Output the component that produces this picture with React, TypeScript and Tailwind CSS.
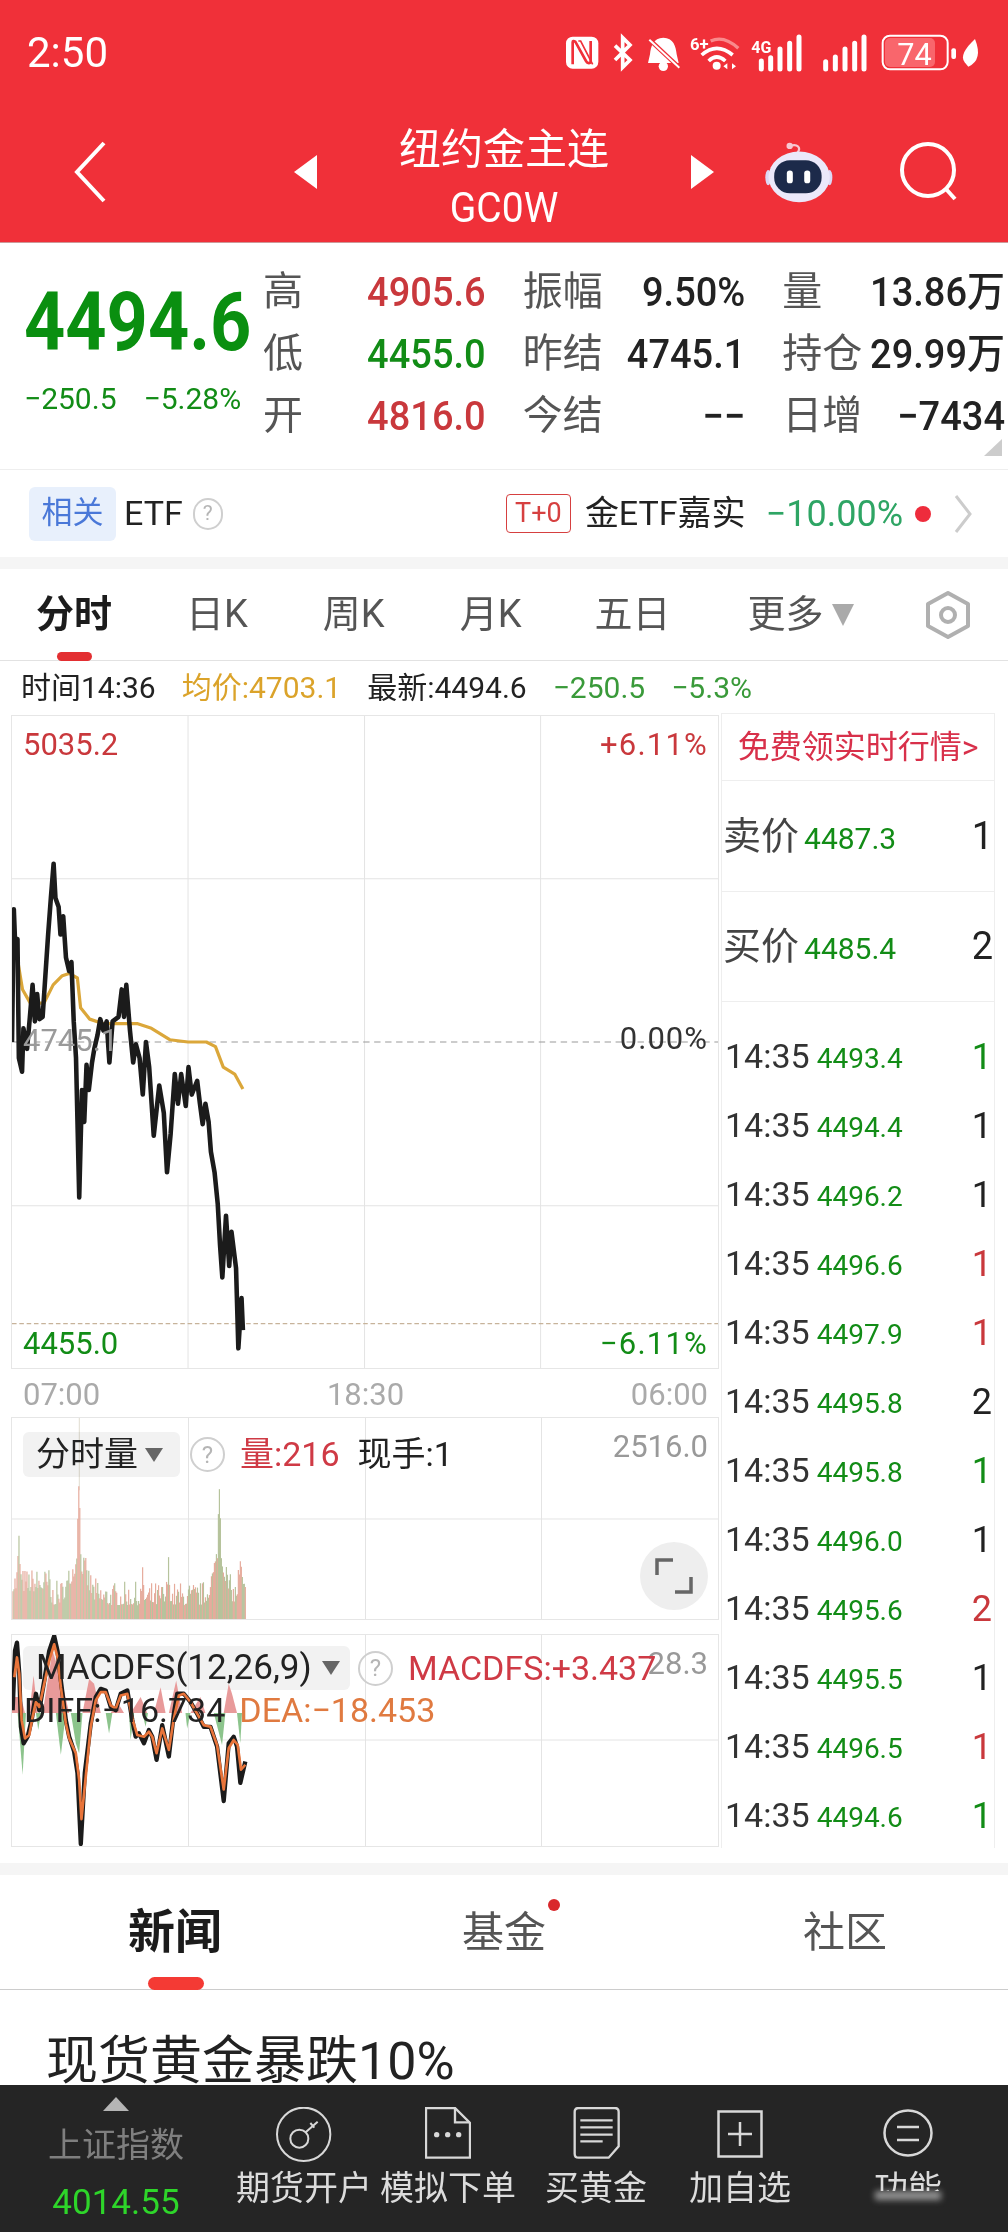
const tradeRows = [
  { price: '4493.4', qty: '1', color: 'text-[#128c16]' },
  { price: '4494.4', qty: '1', color: 'text-[#222]' },
  { price: '4496.2', qty: '1', color: 'text-[#222]' },
  { price: '4496.6', qty: '1', color: 'text-[#c9383c]' },
  { price: '4497.9', qty: '1', color: 'text-[#c9383c]' },
  { price: '4495.8', qty: '2', color: 'text-[#222]' },
  { price: '4495.8', qty: '1', color: 'text-[#128c16]' },
  { price: '4496.0', qty: '1', color: 'text-[#222]' },
  { price: '4495.6', qty: '2', color: 'text-[#c9383c]' },
  { price: '4495.5', qty: '1', color: 'text-[#222]' },
  { price: '4496.5', qty: '1', color: 'text-[#c9383c]' },
  { price: '4494.6', qty: '1', color: 'text-[#128c16]' },
];

const pricePts =
  '25,745 29,455 33,560 37,520 40,780 47,810 50,715 58,760 65,680 70,620 75,700 80,640 85,695 92,690 98,600 104,510 110,430 116,355 120,430 127,450 131,510 137,470 143,560 150,590 155,570 160,700 165,780 172,1085 178,850 183,920 188,795 193,850 200,790 205,760 212,730 218,695 225,720 232,700 238,790 245,700 258,690 265,630 270,690 275,620 283,720 290,790 296,750 304,780 311,860 318,745 325,800 335,950 347,840 357,900 364,1030 372,945 381,815 388,880 395,815 405,885 411,800 418,860 430,830 436,880 442,925 448,880 455,920 460,985 468,1030 475,1100 480,1190 485,1260 493,1125 500,1235 505,1160 515,1240 520,1415 527,1305 530,1375';
const avgPts =
  '38,570 48,630 65,660 95,660 115,620 135,600 150,595 168,605 175,670 195,695 225,705 260,705 300,705 330,715 370,740 410,745 450,745 470,755 487,800 512,815 530,848';
const diffPts =
  '5,240 12,60 18,35 25,130 30,290 38,340 50,320 62,270 75,190 85,240 100,150 115,60 130,15 140,60 150,150 165,270 175,320 190,365 200,430 210,645 222,430 240,280 255,200 270,175 285,180 300,230 315,240 330,190 350,180 365,270 375,320 385,310 400,340 415,300 425,320 438,390 455,285 475,380 490,250 500,190 520,190 540,215 560,250 580,290 600,290 620,350 640,515 655,340 670,320 680,350 690,460 705,395';
const deaPts =
  '10,140 18,80 25,130 32,270 42,325 55,315 65,260 75,215 85,230 100,160 115,90 130,40 140,80 150,170 165,280 175,325 195,370 205,450 212,570 225,440 240,290 255,210 270,185 285,185 300,225 315,235 330,195 350,190 365,265 380,315 400,320 415,305 425,320 438,370 455,295 475,360 490,265 505,195 520,190 540,215 560,250 580,285 600,290 620,345 640,480 655,355 670,330 682,345 692,420 705,405';
const macdRed = ['0,248 2,200 30,200 42,248', '55,248 68,135 80,248', '95,248 125,60 150,140 175,248', '215,248 235,145 250,160 270,248', '300,248 320,215 340,248', '360,248 390,200 410,248', '430,248 450,170 465,248', '475,248 497,150 515,248', '540,248 570,200 585,248', '640,248 655,160 665,190 680,248'];
const macdGreen = ['20,248 35,435 45,248', '75,248 82,300 90,248', '135,248 150,375 165,248', '180,248 195,340 205,370 215,248', '285,248 295,310 305,248', '355,248 360,330 370,248', '395,248 405,290 412,248', '525,248 530,295 540,248', '610,248 635,345 645,248', '680,248 690,340 695,248'];

// fixed seed so the volume bars come out the same on every load
let seed = 7;
const rand = () => { seed = (seed * 16807) % 2147483647; return seed / 2147483647; };
const bump = (x: number, c: number, w: number, h: number) => h * Math.exp(-((x - c) * (x - c)) / (2 * w * w));
const volumeBars = Array.from({ length: 234 }, (_, i) => {
  const x = 12 + i;
  const r = rand();
  const height = 14 + r * r * 24 + (x < 50 ? 14 : 0)
    + bump(x, 78, 1, 85) + bump(x, 78, 8, 35) + bump(x, 219, 1, 70) + bump(x, 219, 6, 40)
    + bump(x, 18, 1, 40) + bump(x, 168, 1, 30) + bump(x, 240, 2, 28) + bump(x, 142, 1, 16);
  return { x, height, color: rand() > 0.5 ? '#e6ab9c' : '#b6c39c' };
});

function StatusIcons() {
  return (
    <svg width="440" height="60" viewBox="0 0 1320 180">
      <rect x="18" y="35" width="97" height="96" rx="20" fill="#fff" />
      <path d="M38 118V52Q38 46 46 50L78 108Q84 118 92 112V48" fill="none" stroke="#f03039" strokeWidth="8" />
      <path d="M55 48L62 48L98 118" fill="none" stroke="#f03039" strokeWidth="5" />
      <path d="M165 62L210 105L188 127V38L210 60L165 105" fill="none" stroke="#fff" strokeWidth="11" />
      <path d="M310 38C280 38 272 64 270 88L264 114H356L350 88C348 64 340 38 310 38Z" fill="#fff" />
      <circle cx="310" cy="124" r="14" fill="#fff" />
      <path d="M262 38L358 128" stroke="#f03039" strokeWidth="13" />
      <path d="M268 44L358 128" stroke="#fff" strokeWidth="6" />
      <text x="390" y="74" fill="#fff" fontSize="50" fontWeight="700" fontFamily="Roboto">6+</text>
      <path d="M452 48Q492 30 535 70" fill="none" stroke="#f98a8c" strokeWidth="10" />
      <path d="M425 90Q470 50 518 90" fill="none" stroke="#fff" strokeWidth="11" />
      <path d="M446 108Q470 84 496 108" fill="none" stroke="#fff" strokeWidth="11" />
      <circle cx="470" cy="122" r="12" fill="#fff" />
      <path d="M502 115L490 124L502 133ZM516 115L528 124L516 133Z" fill="#fff" />
      <text x="574" y="84" fill="#fff" fontSize="48" fontWeight="700" fontFamily="Roboto">4G</text>
      <path d="M604 108V132M632 98V132M660 72V132M689 55V132M717 36V132" stroke="#fff" strokeWidth="15" strokeLinecap="round" />
      <path d="M797 110V132M826 96V132M855 72V132M884 55V132M912 36V132" stroke="#fff" strokeWidth="15" strokeLinecap="round" />
      <rect x="968" y="32" width="195" height="101" rx="22" fill="none" stroke="#fff" strokeWidth="6" />
      <rect x="975" y="39" width="150" height="87" rx="15" fill="#f9666c" />
      <text x="1012" y="119" fill="#fff" fontSize="92" fontFamily="Roboto">74</text>
      <rect x="1174" y="70" width="14" height="32" rx="6" fill="#fff" />
      <path d="M1245 42C1215 70 1200 95 1214 112L1225 125Q1270 105 1245 42Z" fill="#fff" />
    </svg>
  );
}

function Robot() {
  return (
    <svg width="68" height="64" viewBox="70 25 215 195">
      <path d="M172 62C186 46 172 32 150 40" fill="none" stroke="#f7c7d2" strokeWidth="7" />
      <circle cx="148" cy="40" r="10" fill="#f7c7d2" />
      <ellipse cx="80" cy="140" rx="9" ry="24" fill="#dcd8f5" />
      <ellipse cx="274" cy="140" rx="9" ry="24" fill="#dcd8f5" />
      <ellipse cx="178" cy="138" rx="97" ry="80" fill="#ebe8fa" />
      <rect x="99" y="85" width="150" height="105" rx="50" fill="#1c2a4a" />
      <rect x="139" y="118" width="19" height="40" rx="9" fill="#fff" />
      <rect x="194" y="118" width="19" height="40" rx="9" fill="#fff" />
    </svg>
  );
}

function HelpCircle({ big }: { big?: boolean }) {
  return (
    <span className={`flex items-center justify-center rounded-full border-2 border-[#cfcfcf] text-[#b5b5b5] ${big ? 'w-[35px] h-[35px] text-[24px]' : 'w-[30px] h-[32px] text-[21px]'}`}>?</span>
  );
}

function PriceChart() {
  return (
    <svg className="absolute inset-0 w-full h-full" viewBox="25 32 1544 1426" preserveAspectRatio="none">
      <path d="M410 32V1458M796 32V1458M1181 32V1458M25 388H1569M25 1103H1569" stroke="#e4e4e4" strokeWidth="2.2" />
      <path d="M25 745H1569" stroke="#9a9a9a" strokeWidth="2.5" strokeDasharray="14 10" />
      <path d="M25 1361H1569" stroke="#c7b39a" strokeWidth="2.5" strokeDasharray="10 6" />
      <polyline points={avgPts} fill="none" stroke="#dba73a" strokeWidth="7" strokeLinejoin="round" />
      <polyline points={pricePts} fill="none" stroke="#1b1b1b" strokeWidth="10" strokeLinejoin="round" />
    </svg>
  );
}

function VolumeChart() {
  return (
    <svg className="absolute inset-0 w-full h-full" viewBox="11 1417 708 203" preserveAspectRatio="none">
      <path d="M188 1417V1620M365.5 1417V1620M542 1417V1620M11 1519H719" stroke="#e4e4e4" strokeWidth="1" />
      <path d="M78.5 1417V1490" stroke="#e0dcd0" strokeWidth="1" />
      {volumeBars.map(bar => (
        <line key={bar.x} x1={bar.x} x2={bar.x} y1={1620} y2={1620 - bar.height} stroke={bar.color} strokeWidth="1.2" />
      ))}
    </svg>
  );
}

function MacdChart() {
  return (
    <svg className="absolute inset-0 w-full h-full" viewBox="11 1634 708 213" preserveAspectRatio="none">
      <path d="M188 1634V1847M365.5 1634V1847M542 1634V1847M11 1740H719" stroke="#e4e4e4" strokeWidth="1" />
      <g transform="translate(10 1630) scale(0.3333)">
        {macdRed.map(p => <polygon key={p} points={p} fill="#e89a9a" />)}
        {macdGreen.map(p => <polygon key={p} points={p} fill="#8cc48c" />)}
        <polyline points={diffPts} fill="none" stroke="#1b1b1b" strokeWidth="13" strokeLinejoin="round" />
        <polyline points={deaPts} fill="none" stroke="#e8743a" strokeWidth="8" strokeLinejoin="round" />
      </g>
    </svg>
  );
}

function NavIcon({ name }: { name: string }) {
  if (name === 'key') {
    return (
      <svg width="56" height="56" viewBox="50 48 168 168" fill="none" stroke="#d8d8d8" strokeWidth="6">
        <circle cx="133" cy="130" r="80" />
        <circle cx="120" cy="143" r="27" />
        <path d="M139 124L175 92M153 96L165 110" />
      </svg>
    );
  }
  if (name === 'doc') {
    return (
      <svg width="46" height="52" viewBox="500 52 138 156" fill="none" stroke="#d8d8d8" strokeWidth="7">
        <path d="M503 55H590L635 100V204H503Z" />
        <path d="M590 55V98H635" />
        <circle cx="535" cy="135" r="8" fill="#d8d8d8" stroke="none" />
        <circle cx="568" cy="135" r="8" fill="#d8d8d8" stroke="none" />
        <circle cx="601" cy="135" r="8" fill="#d8d8d8" stroke="none" />
      </svg>
    );
  }
  if (name === 'note') {
    return (
      <svg width="47" height="52" viewBox="933 52 141 156" fill="none" stroke="#d8d8d8" strokeWidth="7">
        <path d="M950 55H1058Q1070 55 1070 67V170L1040 204H950Q938 204 938 192V67Q938 55 950 55Z" />
        <path d="M955 92H1052M955 113H1052M955 135H1052M955 155H1022" />
      </svg>
    );
  }
  if (name === 'plus') {
    return (
      <svg width="46" height="48" viewBox="0 0 46 48" fill="none" stroke="#d8d8d8" strokeWidth="2.5">
        <rect x="1.5" y="1.5" width="43" height="45" />
        <path d="M23 12V36M11 24H35" />
      </svg>
    );
  }
  return (
    <svg width="50" height="48" viewBox="0 0 50 48" fill="none" stroke="#d8d8d8" strokeWidth="2.5">
      <ellipse cx="25" cy="24" rx="23.5" ry="22.5" />
      <path d="M14 18H36M14 31H36" />
    </svg>
  );
}

function QuoteCell({ label, value, color }: { label: string; value: string; color: string }) {
  return (
    <div className="flex items-center justify-between h-[62px]">
      <span className="text-[40px] text-[#555]">{label}</span>
      <span className={`inline-block scale-y-[1.08] text-[38px] font-medium ${color}`}>{value}</span>
    </div>
  );
}

export default function App() {
  return (
    <div className="w-[1008px] h-[2232px] overflow-hidden bg-white font-['Roboto','Noto_Sans_CJK_SC',sans-serif]">
      {/* header */}
      <div className="h-[243px] bg-[#f03039] text-white border-b border-[#c99]">
        <div className="h-[106px] flex items-center justify-between pl-[27px] pr-[8px]">
          <span className="text-[42px] leading-none">2:50</span>
          <div className="mt-[4px]"><StatusIcons /></div>
        </div>
        <div className="h-[132px] flex items-center pl-[74px]">
          <svg width="32" height="62" viewBox="0 0 32 62" fill="none" stroke="#fff" strokeWidth="4">
            <path d="M30 2L3 31L30 60" />
          </svg>
          <svg className="ml-[188px]" width="23" height="34" viewBox="0 0 23 34"><path d="M23 0V34L0 17Z" fill="#fff" /></svg>
          <div className="w-[374px] mt-[11px] flex flex-col items-center">
            <span className="text-[42px] leading-[50px]">纽约金主连</span>
            <span className="inline-block scale-y-[1.1] text-[39px] leading-[44px] mt-[11px]">GC0W</span>
          </div>
          <svg width="23" height="34" viewBox="0 0 23 34"><path d="M0 0V34L23 17Z" fill="#fff" /></svg>
          <div className="ml-[51px]"><Robot /></div>
          <svg className="ml-[66px]" width="60" height="60" viewBox="0 0 60 60" fill="none" stroke="#fff" strokeWidth="4">
            <circle cx="29" cy="28" r="26" />
            <path d="M47 47L56 57" />
          </svg>
        </div>
      </div>

      {/* quote */}
      <div className="relative h-[227px] flex border-b border-[#eee]">
        <div className="w-[263px] pl-[24px] pt-[44px]">
          <div className="scale-y-[1.12] text-[72px] leading-[72px] font-bold text-[#0a8f10]">4494.6</div>
          <div className="mt-[19px] h-[40px] flex items-center gap-[27px] text-[30px] text-[#128c16]">
            <span>−250.5</span>
            <span>−5.28%</span>
          </div>
        </div>
        <div className="grid grid-cols-3 w-[742px] h-[186px] mt-[18px] gap-x-[37px]">
          <QuoteCell label="高" value="4905.6" color="text-[#c9383c]" />
          <QuoteCell label="振幅" value="9.50%" color="text-[#222]" />
          <QuoteCell label="量" value="13.86万" color="text-[#222]" />
          <QuoteCell label="低" value="4455.0" color="text-[#128c16]" />
          <QuoteCell label="昨结" value="4745.1" color="text-[#222]" />
          <QuoteCell label="持仓" value="29.99万" color="text-[#222]" />
          <QuoteCell label="开" value="4816.0" color="text-[#c9383c]" />
          <QuoteCell label="今结" value="−−" color="text-[#222]" />
          <QuoteCell label="日增" value="−7434" color="text-[#222]" />
        </div>
        <svg className="absolute right-[6px] bottom-[13px]" width="18" height="17" viewBox="0 0 18 17"><path d="M18 0V17H0Z" fill="#ccc" /></svg>
      </div>

      {/* related */}
      <div className="h-[87px] flex items-center justify-between pl-[29px] pr-[36px]">
        <div className="flex items-center">
          <span className="w-[87px] h-[54px] flex items-center justify-center rounded-md bg-[#e8f0fc] text-[31px] text-[#4a78d8]">相关</span>
          <span className="ml-[8px] text-[34px] text-[#222]">ETF</span>
          <span className="ml-[10px]"><HelpCircle /></span>
        </div>
        <div className="flex items-center">
          <span className="w-[65px] h-[39px] flex items-center justify-center rounded-[4px] border border-[#d64040] text-[27px] text-[#d64040]">T+0</span>
          <span className="ml-[14px] text-[34px] text-[#222]">金ETF嘉实</span>
          <span className="ml-[20px] text-[36px] text-[#2ea564]">−10.00%</span>
          <span className="ml-[12px] w-[16px] h-[16px] rounded-full bg-[#ee2c3c]" />
          <svg className="ml-[23px]" width="18" height="40" viewBox="0 0 18 40" fill="none" stroke="#ccc" strokeWidth="3"><path d="M2 2L16 20L2 38" /></svg>
        </div>
      </div>
      <div className="h-[12px] bg-[#f5f5f5]" />

      {/* period tabs */}
      <div className="h-[92px] flex items-center pl-[36px] border-b border-[#e2e2e2] text-[38px] text-[#555]">
        <span className="relative w-[77px] font-bold text-[#1c1c1c]">
          分时
          <span className="absolute left-[21px] top-[66px] w-[35px] h-[9px] rounded-full bg-[#e32f32]" />
        </span>
        <span className="ml-[73px]">日K</span>
        <span className="ml-[75px]">周K</span>
        <span className="ml-[75px]">月K</span>
        <span className="ml-[73px]">五日</span>
        <span className="ml-[77px]">更多</span>
        <svg className="ml-[8px]" width="22" height="22" viewBox="0 0 22 22"><path d="M0 0H22L11 22Z" fill="#aaa" /></svg>
        <svg className="ml-[71px]" width="46" height="48" viewBox="0 0 46 48" fill="none" stroke="#b0b0b0" strokeWidth="4">
          <path d="M23 2L43 13V35L23 46L3 35V13Z" strokeLinejoin="round" />
          <circle cx="23" cy="24" r="7" />
        </svg>
      </div>

      {/* info row */}
      <div className="h-[52px] flex items-center gap-[26px] pl-[21px] text-[30px]">
        <span className="text-[#222]">时间14:36</span>
        <span className="text-[#dba32a]">均价:4703.1</span>
        <span className="text-[#222]">最新:4494.6</span>
        <span className="text-[#3a9a3a]">−250.5</span>
        <span className="text-[#3a9a3a]">−5.3%</span>
      </div>

      {/* charts and trades */}
      <div className="flex h-[1135px]">
        <div className="w-[719px] pl-[11px] pt-[2px]">
          <div className="relative h-[654px] border border-[#e6e6e6]">
            <PriceChart />
            <span className="absolute left-[11px] top-[11px] text-[31px] leading-[36px] text-[#c9383c]">5035.2</span>
            <span className="absolute right-[10px] top-[11px] text-[31px] leading-[36px] tracking-[1.2px] text-[#c9383c]">+6.11%</span>
            <span className="absolute left-[11px] top-[307px] text-[31px] leading-[36px] text-[#9a9a9a]">4745.1</span>
            <span className="absolute right-[10px] top-[305px] text-[31px] leading-[36px] tracking-[1px] text-[#333]">0.00%</span>
            <span className="absolute left-[11px] top-[610px] text-[31px] leading-[36px] text-[#128c16]">4455.0</span>
            <span className="absolute right-[10px] top-[610px] text-[31px] leading-[36px] tracking-[1.2px] text-[#128c16]">−6.11%</span>
          </div>
          <div className="h-[48px] pt-[5px] flex items-center justify-between px-[12px] text-[31px] text-[#aaa]">
            <span>07:00</span>
            <span className="ml-[6px] mr-[6px]">18:30</span>
            <span className="-mr-[1px]">06:00</span>
          </div>
          <div className="relative h-[203px] border border-[#e6e6e6]">
            <VolumeChart />
            <div className="absolute left-[11px] top-[11px] flex items-center text-[34px]">
              <div className="w-[157px] h-[45px] flex items-center pl-[13px] rounded-md bg-[#f2f2f2] mix-blend-multiply text-[#222]">
                分时量
                <svg className="ml-[7px]" width="18" height="14" viewBox="0 0 18 14"><path d="M0 0H18L9 14Z" fill="#666" /></svg>
              </div>
              <span className="ml-[10px]"><HelpCircle big /></span>
              <span className="ml-[15px] text-[#cf3a45]">量:216</span>
              <span className="ml-[18px] text-[#222]">现手:1</span>
            </div>
            <span className="absolute right-[10px] top-[10px] text-[31px] leading-[38px] text-[#999]">2516.0</span>
            <button className="absolute left-[628px] top-[124px] w-[68px] h-[68px] flex items-center justify-center rounded-full bg-[#eee]">
              <svg width="38" height="38" viewBox="0 0 38 38" fill="none" stroke="#666" strokeWidth="3.5">
                <path d="M2 18V3H18M20 35H36V20" />
              </svg>
            </button>
          </div>
          <div className="relative h-[213px] mt-[14px] border border-[#e6e6e6]">
            <div className="absolute left-[11px] top-[11px] w-[327px] h-[44px] rounded-md bg-[#f2f2f2]" />
            <MacdChart />
            <span className="absolute right-[10px] top-[10px] text-[31px] leading-[38px] text-[#999]">28.3</span>
            <div className="absolute left-[11px] top-[11px] h-[44px] flex items-center text-[34px]">
              <div className="w-[327px] flex items-center pl-[13px] text-[#222]">
                <span className="text-[35px]">MACDFS(12,26,9)</span>
                <svg className="ml-[10px]" width="18" height="14" viewBox="0 0 18 14"><path d="M0 0H18L9 14Z" fill="#666" /></svg>
              </div>
              <span className="ml-[8px]"><HelpCircle big /></span>
              <span className="ml-[15px] text-[#cf3a45] whitespace-nowrap">MACDFS:+3.437</span>
            </div>
            <div className="absolute left-[12px] top-[53px] flex items-center text-[34px] leading-[44px]">
              <span className="text-[#222]">DIFF:−16.734</span>
              <span className="ml-[14px] text-[#e07a40]">DEA:−18.453</span>
            </div>
          </div>
        </div>

        <div className="w-[274px] ml-[2px] h-[1135px] border-x border-[#eee]">
          <div className="h-[68px] flex items-center justify-center border-y border-[#eee] text-[32px] text-[#d8304a]">免费领实时行情&gt;</div>
          <div className="h-[111px] flex items-center justify-between pl-[1px] pr-[1px] border-b border-[#eee]">
            <span className="text-[38px] text-[#444]">卖价<span className="ml-[5px] text-[30px] text-[#128c16]">4487.3</span></span>
            <span className="text-[38px] text-[#222]">1</span>
          </div>
          <div className="h-[110px] flex items-center justify-between pl-[1px] pr-[1px] border-b border-[#eee]">
            <span className="text-[38px] text-[#444]">买价<span className="ml-[5px] text-[30px] text-[#128c16]">4485.4</span></span>
            <span className="text-[38px] text-[#222]">2</span>
          </div>
          <div className="pt-[20px]">
            {tradeRows.map((row, i) => (
              <div key={i} className="h-[69px] flex items-center justify-between pl-[3px] pr-[2px]">
                <span className="flex items-baseline">
                  <span className="text-[34px] text-[#333]">14:35</span>
                  <span className="ml-[7px] text-[28px] text-[#128c16]">{row.price}</span>
                </span>
                <span className={`text-[36px] ${row.color}`}>{row.qty}</span>
              </div>
            ))}
          </div>
        </div>
      </div>

      <div className="h-[15px]" />
      <div className="h-[12px] bg-[#f5f5f5]" />

      {/* news tabs */}
      <div className="h-[115px] flex items-center pl-[128px] border-b border-[#ccc] text-[40px] text-[#555]">
        <span className="relative text-[47px] font-bold text-[#1c1c1c]">
          新闻
          <span className="absolute left-[20px] top-[80px] w-[56px] h-[13px] rounded-full bg-[#f43a34]" />
        </span>
        <span className="relative ml-[240px] text-[42px]">
          基金
          <span className="absolute -right-[14px] -top-[2px] w-[12px] h-[12px] rounded-full bg-[#d9282c]" />
        </span>
        <span className="ml-[257px] text-[42px]">社区</span>
      </div>

      {/* headline */}
      <div className="h-[95px] overflow-hidden pl-[46px] pt-[39px] text-[52px] leading-[66px] text-[#222]">现货黄金暴跌10%</div>

      {/* bottom bar */}
      <div className="h-[147px] flex bg-[#252525] text-[#dcdcdc] text-[34px]">
        <div className="w-[232px] flex flex-col items-center pt-[12px]">
          <svg width="26" height="14" viewBox="0 0 26 14"><path d="M13 0L26 14H0Z" fill="#b5b5b5" /></svg>
          <span className="mt-[12px] leading-[44px] text-[#7f7f7f]">上证指数</span>
          <span className="mt-[14px] leading-[44px] text-[35px] text-[#2ed52a]">4014.55</span>
        </div>
        <div className="w-[144px] flex flex-col items-center pt-[22px]">
          <div className="h-[56px] flex items-center"><NavIcon name="key" /></div>
          <span className="mt-[3px] leading-[44px] whitespace-nowrap">期货开户</span>
        </div>
        <div className="w-[144px] flex flex-col items-center pt-[22px]">
          <div className="h-[56px]"><NavIcon name="doc" /></div>
          <span className="mt-[3px] leading-[44px] whitespace-nowrap">模拟下单</span>
        </div>
        <div className="w-[152px] flex flex-col items-center pt-[22px]">
          <div className="h-[56px]"><NavIcon name="note" /></div>
          <span className="mt-[3px] leading-[44px]">买黄金</span>
        </div>
        <div className="w-[136px] flex flex-col items-center pt-[22px]">
          <div className="h-[56px] pt-[3px]"><NavIcon name="plus" /></div>
          <span className="mt-[3px] leading-[44px]">加自选</span>
        </div>
        <div className="w-[200px] flex flex-col items-center pt-[22px]">
          <div className="h-[56px] pt-[2px]"><NavIcon name="equal" /></div>
          <span className="mt-[3px] h-[25px] overflow-hidden leading-[44px]">功能</span>
          <div className="w-[66px] h-[9px] bg-[#ddd]/60 blur-[3px]" />
        </div>
      </div>
    </div>
  );
}
